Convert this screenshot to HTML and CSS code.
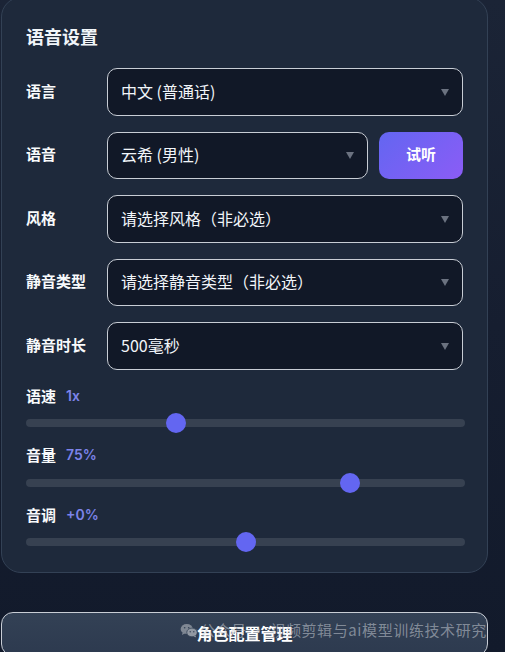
FILE: index.html
```html
<!DOCTYPE html>
<html lang="zh-CN">
<head>
<meta charset="utf-8">
<title>语音设置</title>
<link rel="stylesheet" href="styles.css">
</head>
<body>
<div class="page">
  <section class="card">
    <h2 class="title">语音设置</h2>
    <div class="rows">
      <div class="row">
        <span class="label">语言</span>
        <div class="select">中文 (普通话)</div>
      </div>
      <div class="row">
        <span class="label">语音</span>
        <div class="select">云希 (男性)</div>
        <button class="btn-try">试听</button>
      </div>
      <div class="row">
        <span class="label">风格</span>
        <div class="select">请选择风格（非必选）</div>
      </div>
      <div class="row">
        <span class="label">静音类型</span>
        <div class="select">请选择静音类型（非必选）</div>
      </div>
      <div class="row">
        <span class="label">静音时长</span>
        <div class="select">500毫秒</div>
      </div>
    </div>
    <div class="sliders">
      <div class="slider-group">
        <div class="slider-head"><span class="s-label">语速</span><span class="s-value">1x</span></div>
        <div class="track"><span class="thumb" style="--v:0.3333"></span></div>
      </div>
      <div class="slider-group">
        <div class="slider-head"><span class="s-label">音量</span><span class="s-value">75%</span></div>
        <div class="track"><span class="thumb" style="--v:0.75"></span></div>
      </div>
      <div class="slider-group">
        <div class="slider-head"><span class="s-label">音调</span><span class="s-value">+0%</span></div>
        <div class="track"><span class="thumb" style="--v:0.5"></span></div>
      </div>
    </div>
  </section>
  <button class="btn-manage">角色配置管理</button>
  <div class="watermark">
    <svg class="wm-icon" viewBox="0 0 24 20" width="18" height="15" aria-hidden="true">
      <ellipse cx="9" cy="8" rx="8.2" ry="6.8" fill="#8d949f"/>
      <path d="M3.5 12.5 L2.6 16 L6.8 13.8 Z" fill="#8d949f"/>
      <ellipse cx="16" cy="12.6" rx="7" ry="5.8" fill="#a2a8b1" stroke="#334155" stroke-width="1"/>
      <path d="M20.5 16.5 L21.6 19.4 L18 17.6 Z" fill="#a2a8b1"/>
      <circle cx="6.2" cy="6.3" r="1.1" fill="#334155"/>
      <circle cx="11.6" cy="6.3" r="1.1" fill="#334155"/>
      <circle cx="13.6" cy="11.6" r="0.9" fill="#334155"/>
      <circle cx="18.4" cy="11.6" r="0.9" fill="#334155"/>
    </svg>
    <span class="wm-text">公众号 · 视频剪辑与ai模型训练技术研究</span>
  </div>
</div>
</body>
</html>
```

FILE: styles.css
```css
* { box-sizing: border-box; }

html, body {
  margin: 0;
  padding: 0;
  height: 100%;
  overflow: hidden;
}

body {
  background: linear-gradient(180deg, #1b2436 0%, #161e30 50%, #121a2b 100%);
  font-family: Inter, "Noto Sans CJK SC", "Noto Sans", sans-serif;
  color: #f1f5f9;
}

.page {
  position: relative;
  width: 487px;
  margin-left: 1px;
  margin-top: -3px;
}

.card {
  background: #1e293b;
  border: 1px solid #334155;
  border-radius: 20px;
  padding: 26px 24px 20px 24px;
}

.title {
  margin: 0;
  font-size: 18px;
  line-height: 24px;
  font-weight: 700;
  color: #f1f5f9;
  font-family: "Noto Sans CJK SC", sans-serif;
}

.rows {
  margin-top: 20px;
  display: flex;
  flex-direction: column;
  gap: 16px;
}

.row {
  display: flex;
  align-items: center;
  gap: 11px;
  height: 47.5px;
}

.label {
  width: 81px;
  flex: none;
  margin-right: -11px;
  padding-bottom: 3px;
  font-family: "Noto Sans CJK SC", sans-serif;
  font-size: 15px;
  font-weight: 700;
  color: #f8fafc;
}

.select {
  position: relative;
  flex: 1;
  height: 100%;
  display: flex;
  align-items: center;
  padding-left: 13px;
  padding-bottom: 2px;
  background: #111827;
  border: 1px solid #c8cdd5;
  border-radius: 10px;
  font-size: 16px;
  color: #f1f5f9;
  font-family: "Noto Sans CJK SC", sans-serif;
}

.select::after {
  content: "";
  position: absolute;
  right: 13px;
  top: 50%;
  margin-top: -3px;
  border-left: 4px solid transparent;
  border-right: 4px solid transparent;
  border-top: 7px solid #6b7280;
}

.btn-try {
  flex: none;
  width: 84px;
  height: 100%;
  border: none;
  border-radius: 10px;
  background: linear-gradient(135deg, #6366f1 0%, #8b5cf6 100%);
  color: #ffffff;
  font-family: "Noto Sans CJK SC", sans-serif;
  font-size: 15px;
  font-weight: 700;
  padding: 0 0 3px 0;
}

.sliders {
  margin-top: 16.5px;
  display: flex;
  flex-direction: column;
  gap: 12.5px;
}

.slider-head {
  display: flex;
  align-items: center;
  gap: 10px;
  height: 20px;
  padding-bottom: 2px;
}

.s-label {
  font-family: "Noto Sans CJK SC", sans-serif;
  font-size: 15px;
  font-weight: 700;
  color: #f8fafc;
}

.s-value {
  font-family: Inter, sans-serif;
  font-size: 14px;
  font-weight: 600;
  color: #7c83e9;
}

.track {
  position: relative;
  margin-top: 7px;
  margin-right: -2px;
  height: 20px;
}

.track::before {
  content: "";
  position: absolute;
  left: 0;
  right: 0;
  top: 6px;
  height: 8px;
  border-radius: 4px;
  background: #374151;
}

.thumb {
  position: absolute;
  top: 0;
  left: calc(var(--v) * (100% - 20px));
  width: 20px;
  height: 20px;
  border-radius: 50%;
  background: #6366f1;
}

.btn-manage {
  display: block;
  width: 100%;
  margin-top: 39px;
  height: 44px;
  border: 1px solid #c8cdd5;
  border-radius: 12px;
  background: linear-gradient(180deg, #334155 0%, #2d3a4f 100%);
  color: #ffffff;
  font-family: "Noto Sans CJK SC", sans-serif;
  font-size: 16px;
  font-weight: 700;
  padding: 0 0 3px 0;
}

.watermark {
  position: absolute;
  left: 179px;
  top: 623px;
  display: flex;
  align-items: center;
  gap: 2px;
  pointer-events: none;
  white-space: nowrap;
}

.wm-icon { opacity: 0.85; }

.wm-text {
  font-family: "Noto Sans CJK SC", sans-serif;
  font-size: 15px;
  line-height: 20px;
  color: rgba(200, 205, 212, 0.55);
  letter-spacing: 0.6px;
}
```
